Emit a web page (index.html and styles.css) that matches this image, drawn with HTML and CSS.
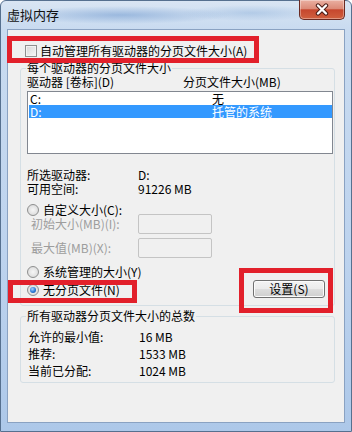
FILE: index.html
```html
<!DOCTYPE html>
<html lang="zh-CN">
<head>
<meta charset="utf-8">
<title>虚拟内存</title>
<link rel="stylesheet" href="styles.css">
</head>
<body>
<div class="window">
  <div class="titlebar">
    <span class="title">虚拟内存</span>
    <div class="close">
      <svg width="16" height="13" viewBox="0 0 16 13">
        <path d="M4 2.5 L12 10.5 M12 2.5 L4 10.5" stroke="#4a1c16" stroke-width="4.4" stroke-linecap="round"/>
        <path d="M4 2.5 L12 10.5 M12 2.5 L4 10.5" stroke="#ffffff" stroke-width="2.4" stroke-linecap="round"/>
      </svg>
    </div>
  </div>
  <div class="client">
    <div class="auto-row"><span class="checkbox"></span><span>自动管理所有驱动器的分页文件大小(A)</span></div>

    <fieldset class="group g1">
      <legend>每个驱动器的分页文件大小</legend>
      <div class="list-head"><span>驱动器 [卷标](D)</span><span>分页文件大小(MB)</span></div>
      <div class="listbox">
        <div class="lrow"><span>C:</span><span>无</span></div>
        <div class="lrow sel"><span>D:</span><span>托管的系统</span></div>
      </div>
      <div class="info">
        <span>所选驱动器:</span><span>D:</span>
        <span>可用空间:</span><span>91226 MB</span>
      </div>
      <div class="radio-row custom"><span class="radio"></span><span>自定义大小(C):</span></div>
      <div class="field-row"><span class="flabel">初始大小(MB)(I):</span><span class="tbox"></span></div>
      <div class="field-row second"><span class="flabel">最大值(MB)(X):</span><span class="tbox"></span></div>
      <div class="bottom">
        <div class="radios">
          <div class="radio-row"><span class="radio"></span><span>系统管理的大小(Y)</span></div>
          <div class="radio-row"><span class="radio on"></span><span>无分页文件(N)</span></div>
        </div>
        <div class="button">设置(S)</div>
      </div>
    </fieldset>

    <fieldset class="group g2">
      <legend>所有驱动器分页文件大小的总数</legend>
      <div class="totals">
        <span>允许的最小值:</span><span>16 MB</span>
        <span>推荐:</span><span>1533 MB</span>
        <span>当前已分配:</span><span>1024 MB</span>
      </div>
    </fieldset>
  </div>

  <div class="mark mark1"></div>
  <div class="mark mark2"></div>
  <div class="mark mark3"></div>
</div>
</body>
</html>
```

FILE: styles.css
```css
* { box-sizing: border-box; }
html, body { margin: 0; padding: 0; }
body {
  width: 352px;
  height: 432px;
  overflow: hidden;
  font-family: "Noto Sans CJK SC", "Noto Sans", sans-serif;
  font-size: 12px;
  color: #000;
  background: #ffffff;
}
.window {
  position: relative;
  width: 352px;
  height: 432px;
  display: flex;
  flex-direction: column;
  border: 1px solid #56708f;
  border-radius: 6px 6px 0 0;
  padding: 0 6px 8px 6px;
  background:
    radial-gradient(ellipse 110px 9px at 120px 14px, rgba(110,152,206,0.55), rgba(110,152,206,0) 100%),
    radial-gradient(ellipse 70px 8px at 250px 12px, rgba(140,176,218,0.45), rgba(140,176,218,0) 100%),
    linear-gradient(180deg, #d9e5f3 0px, #c9dbf0 28px, #bdd3ee 60%, #adc8e9 100%);
}
.titlebar {
  height: 28px;
  display: flex;
  align-items: flex-start;
}
.title {
  margin-top: 6px;
  line-height: 16px;
  font-size: 13px;
  color: #111;
}
.close {
  margin-left: auto;
  margin-top: -1px;
  width: 46px;
  height: 20px;
  border: 1px solid #6a2a22;
  border-top: none;
  border-radius: 0 0 5px 5px;
  background: linear-gradient(180deg, #eab0a2 0%, #dc8b78 45%, #c6472e 52%, #d0603f 100%);
  box-shadow: inset 0 0 0 1px rgba(255,255,255,0.35);
  display: flex;
  align-items: center;
  justify-content: center;
}
.client {
  flex: 1;
  background: #f0f0f0;
  border: 1px solid #8aa2c2;
  padding-top: 13px;
}
.auto-row {
  display: flex;
  align-items: center;
  gap: 3px;
  margin-left: 17px;
  height: 16px;
  line-height: 16px;
}
.checkbox {
  width: 12px;
  height: 12px;
  border: 1px solid #8e8f8f;
  background: linear-gradient(135deg, #d6d6d6, #f7f7f7);
  box-shadow: inset 0 0 0 1px #f2f2f2;
}
.group {
  margin: 2px 9px 0 12px;
  border: 1px solid #d5dfe5;
  border-radius: 3px;
  padding: 0 1px 0 6px;
  min-width: 0;
}
.group legend {
  padding: 0 1px;
  margin-left: -1px;
  line-height: 14px;
}
.list-head {
  display: grid;
  grid-template-columns: 156px 1fr;
  line-height: 14px;
  height: 14px;
}
.listbox {
  margin-top: 2px;
  height: 63px;
  border: 1px solid #828790;
  background: #fff;
  padding: 0 0 0 1px;
}
.lrow {
  display: grid;
  grid-template-columns: 182px 1fr;
  height: 13px;
  line-height: 13px;
  padding-left: 1px;
}
.lrow.sel {
  background: #3399ff;
  color: #fff;
}
.info {
  margin-top: 14px;
  display: grid;
  grid-template-columns: 111px 1fr;
  line-height: 14px;
}
.radio-row {
  display: flex;
  align-items: center;
  gap: 4px;
  height: 14px;
  line-height: 14px;
}
.radio-row.custom {
  margin-top: 7px;
  margin-bottom: -3px;
}
.radio {
  width: 12px;
  height: 12px;
  border-radius: 50%;
  border: 1px solid #8e8f8f;
  background: radial-gradient(circle at 50% 50%, #f6f6f6 0%, #e2e2e2 60%, #cfcfcf 100%);
  display: flex;
  align-items: center;
  justify-content: center;
}
.radio.on::after {
  content: "";
  width: 6px;
  height: 6px;
  border-radius: 50%;
  background: radial-gradient(circle at 40% 35%, #a9d4ff 0%, #2a78d4 55%, #0f4d9c 100%);
}
.field-row {
  display: flex;
  align-items: center;
  height: 20px;
  color: #9d9d9d;
}
.field-row.second { margin-top: 4px; }
.flabel {
  width: 111px;
  padding-left: 4px;
  line-height: 14px;
}
.tbox {
  width: 74px;
  height: 20px;
  border: 1px solid #c4c4c4;
  border-radius: 2px;
  background: #f0f0f0;
}
.bottom {
  display: flex;
  align-items: flex-end;
  margin-top: 7px;
  padding-bottom: 8px;
}
.radios {
  display: flex;
  flex-direction: column;
  gap: 4px;
}
.button {
  margin-left: auto;
  margin-right: 8px;
  margin-bottom: -1px;
  width: 72px;
  height: 18px;
  border: 1px solid #707070;
  border-radius: 3px;
  background: linear-gradient(180deg, #f3f3f3 0%, #ebebeb 48%, #dddddd 52%, #cfcfcf 100%);
  box-shadow: inset 0 0 0 1px #fbfbfb;
  text-align: center;
  line-height: 16px;
}
.g2 { margin-top: 3px; padding-bottom: 3px; }
.totals {
  margin-top: 5px;
  display: grid;
  grid-template-columns: 111px 1fr;
  line-height: 17px;
  padding-left: 1px;
}
.mark {
  position: absolute;
  border: 5px solid #e2202b;
}
.mark1 { left: 6px; top: 35px; width: 252px; height: 27px; }
.mark2 { left: 7px; top: 279px; width: 129px; height: 23px; }
.mark3 { left: 238px; top: 267px; width: 94px; height: 45px; }
```
